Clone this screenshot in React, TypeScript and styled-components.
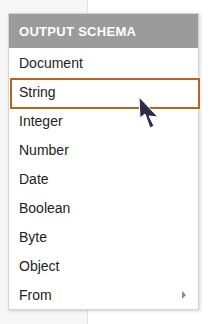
import React from "react";
import styled, { createGlobalStyle } from "styled-components";

const Global = createGlobalStyle`
  html, body {
    margin: 0;
    padding: 0;
    background: #ffffff;
    font-family: "Liberation Sans", Arial, sans-serif;
  }
`;

const Page = styled.div`
  position: relative;
  display: flex;
  width: 218px;
  height: 324px;
  overflow: hidden;
`;

const SidePanel = styled.div`
  width: 87px;
  height: 100%;
  background: #f6f6f6;
  border-right: 1px solid #e2e2e2;
`;

const MainPanel = styled.div`
  flex: 1;
  background: #ffffff;
`;

const Menu = styled.div`
  position: absolute;
  top: 13px;
  left: 8px;
  width: 189px;
  background: #ffffff;
  border: 1px solid #d4d4d4;
  box-shadow: 1px 1px 3px rgba(0, 0, 0, 0.18);
`;

const MenuHeader = styled.div`
  height: 34px;
  display: flex;
  align-items: center;
  padding-left: 10px;
  background: #9b9b9b;
  color: #ffffff;
  font-size: 13px;
  font-weight: 700;
  letter-spacing: 0.3px;
`;

const List = styled.ul`
  list-style: none;
  margin: 0;
  padding: 0;
`;

const Item = styled.li<{ $active?: boolean }>`
  position: relative;
  height: 29px;
  display: flex;
  align-items: center;
  justify-content: space-between;
  padding: 0 12px 0 10px;
  font-size: 14px;
  color: #222222;

  /* hovered row gets the orange frame, a bit over the row's edges */
  &::after {
    content: "";
    display: ${({ $active }) => ($active ? "block" : "none")};
    position: absolute;
    top: 1px;
    left: 1px;
    right: -2px;
    bottom: -3px;
    border: 2.5px solid #b5651e;
  }
`;

const Caret = styled.span`
  width: 0;
  height: 0;
  border-top: 4px solid transparent;
  border-bottom: 4px solid transparent;
  border-left: 4px solid #8a8a8a;
`;

const Cursor = styled.svg`
  position: absolute;
  left: 137px;
  top: 96px;
`;

const types = ["Document", "String", "Integer", "Number", "Date", "Boolean", "Byte", "Object"];

export default function App() {
  return (
    <>
      <Global />
      <Page>
        <SidePanel />
        <MainPanel />
        <Menu>
          <MenuHeader>OUTPUT SCHEMA</MenuHeader>
          <List>
            {types.map((t) => (
              <Item key={t} $active={t === "String"}>
                {t}
              </Item>
            ))}
            <Item>
              From
              <Caret />
            </Item>
          </List>
        </Menu>
        <Cursor width="24" height="34" viewBox="0 0 24 34">
          <path
            d="M2 1 L3 22 L8 18 L13 32 L17 30 L12 20 L21 21 Z"
            fill="#2a2c48"
            stroke="#ffffff"
            strokeWidth="1"
            strokeLinejoin="round"
          />
        </Cursor>
      </Page>
    </>
  );
}
